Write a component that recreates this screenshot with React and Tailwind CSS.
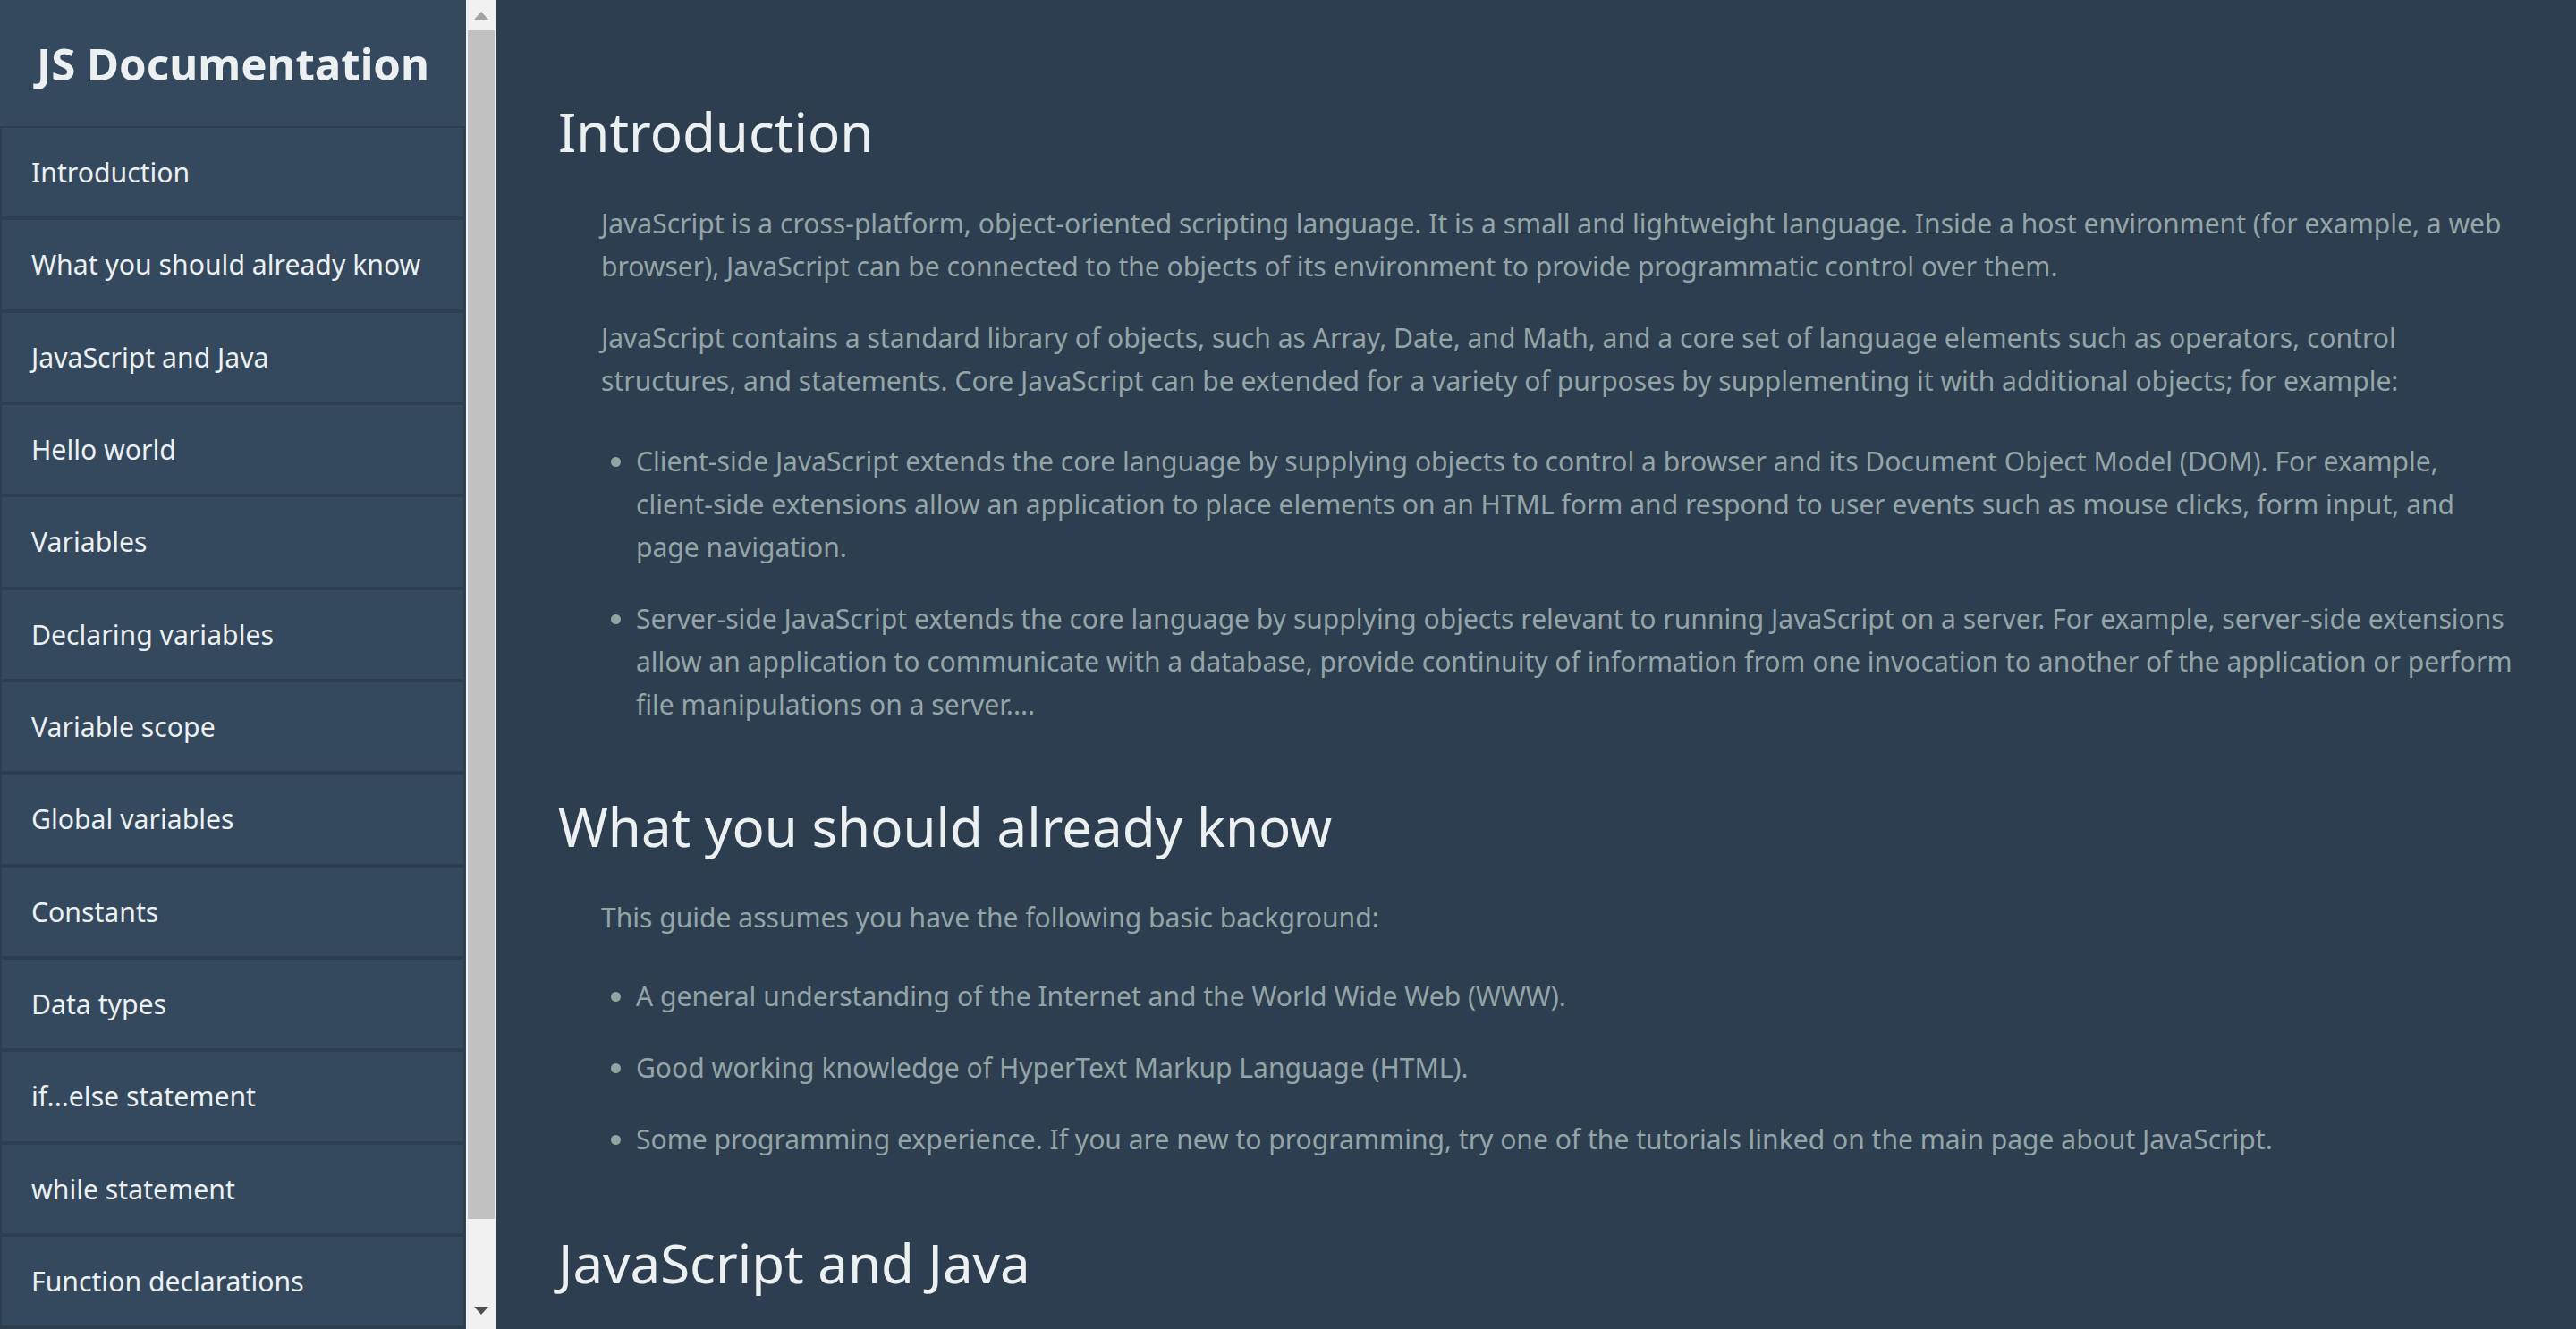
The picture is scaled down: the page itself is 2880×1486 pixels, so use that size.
const navItems = [
  'Introduction',
  'What you should already know',
  'JavaScript and Java',
  'Hello world',
  'Variables',
  'Declaring variables',
  'Variable scope',
  'Global variables',
  'Constants',
  'Data types',
  'if...else statement',
  'while statement',
  'Function declarations',
  'Reference',
]

export default function App() {
  return (
    <div className="flex h-screen overflow-hidden bg-[#2c3e50] font-['Noto_Sans',sans-serif]">
      <aside className="w-[521px] shrink-0 bg-[#34495e] overflow-hidden">
        <header className="h-[141px] flex items-center justify-center">
          <h1 className="text-[49.2px] font-bold text-[#ecf0f1]">JS Documentation</h1>
        </header>
        <nav className="w-[520px]">
          {navItems.map((item) => (
            <a
              key={item}
              href="#"
              className="flex items-center h-[103.33px] border-2 border-[#2c3e50] pl-[33px] text-[30.2px] text-[#ecf0f1]"
            >
              {item}
            </a>
          ))}
        </nav>
      </aside>

      {/* fake scrollbar for the nav */}
      <div className="w-[34px] shrink-0 bg-[#f1f1f1] flex flex-col items-center">
        <div className="h-[34px] flex items-center justify-center">
          <svg width="16" height="9" viewBox="0 0 16 9"><path d="M8 0L16 9H0z" fill="#a3a3a3" /></svg>
        </div>
        <div className="w-[30px] h-[1329px] bg-[#c1c1c1]" />
        <div className="flex-1" />
        <div className="h-[34px] flex items-center justify-center mb-[4px]">
          <svg width="16" height="9" viewBox="0 0 16 9"><path d="M0 0H16L8 9z" fill="#505050" /></svg>
        </div>
      </div>

      <main className="flex-1 pl-[69px] pr-[62px] pt-[109px] text-[#95a5a6]">
        <section className="mb-[74px]">
          <h2 className="text-[60px] leading-[76px] text-[#ecf0f1] mb-[41px]">Introduction</h2>
          <div className="pl-[48px] text-[30.05px] leading-[48px]">
            <p className="mb-[32px]">
              JavaScript is a cross-platform, object-oriented scripting language. It is a small and lightweight language. Inside a host environment (for example, a web browser), JavaScript can be connected to the objects of its environment to provide programmatic control over them.
            </p>
            <p className="mb-[42px]">
              JavaScript contains a standard library of objects, such as Array, Date, and Math, and a core set of language elements such as operators, control structures, and statements. Core JavaScript can be extended for a variety of purposes by supplementing it with additional objects; for example:
            </p>
            <ul className="list-disc pl-[39px] flex flex-col gap-[32px]">
              <li>
                Client-side JavaScript extends the core language by supplying objects to control a browser and its Document Object Model (DOM). For example, client-side extensions allow an application to place elements on an HTML form and respond to user events such as mouse clicks, form input, and page navigation.
              </li>
              <li>
                Server-side JavaScript extends the core language by supplying objects relevant to running JavaScript on a server. For example, server-side extensions allow an application to communicate with a database, provide continuity of information from one invocation to another of the application or perform file manipulations on a server....
              </li>
            </ul>
          </div>
        </section>

        <section className="mb-[76px]">
          <h2 className="text-[60px] leading-[76px] text-[#ecf0f1] mb-[40px]">What you should already know</h2>
          <div className="pl-[48px] text-[30.05px] leading-[48px]">
            <p className="mb-[40px]">This guide assumes you have the following basic background:</p>
            <ul className="list-disc pl-[39px] flex flex-col gap-[32px]">
              <li>A general understanding of the Internet and the World Wide Web (WWW).</li>
              <li>Good working knowledge of HyperText Markup Language (HTML).</li>
              <li>Some programming experience. If you are new to programming, try one of the tutorials linked on the main page about JavaScript.</li>
            </ul>
          </div>
        </section>

        <section>
          <h2 className="text-[60px] leading-[76px] text-[#ecf0f1] mb-[40px]">JavaScript and Java</h2>
          <div className="pl-[48px] text-[30.05px] leading-[48px]">
            <p>
              JavaScript and Java are similar in some ways but fundamentally different in some others.
            </p>
          </div>
        </section>
      </main>
    </div>
  )
}
